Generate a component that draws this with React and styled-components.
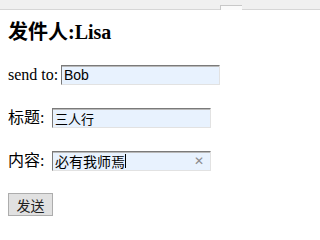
import React from 'react'
import styled, { createGlobalStyle } from 'styled-components'

const GlobalStyle = createGlobalStyle`
    body {
        margin: 0;
        background: #fff;
        font-family: "Liberation Serif", "Noto Sans CJK SC", serif;
        color: #000;
    }
`
const TopBar = styled.div`
    height: 10px;
    padding-top: 5px;
    padding-left: 220px;
    box-sizing: border-box;
    background: #f0f0f0;
    border-bottom: 1px solid #d6d6d6;
    display: flex;
`
const Tab = styled.div`
    width: 22px;
    height: 5px;
    background: #fafafa;
    border-top: 1px solid #c8c8c8;
    border-left: 1px solid #c8c8c8;
    box-sizing: border-box;
`
const Main = styled.div`
    padding: 11px 8px 0;
`
const Sender = styled.h3`
    margin: 0;
    font-size: 20px;
    line-height: 22px;
    font-weight: 700;
`
const Form = styled.div`
    margin-top: 22px;
    display: flex;
    flex-direction: column;
    gap: 23px;
`
const Row = styled.div`
    display: flex;
    align-items: center;
    height: 20px;
`
const Label = styled.span`
    width: ${props => props.w}px;
    font-size: 16px;
    line-height: 20px;
    white-space: nowrap;
`
const Field = styled.div`
    width: 159px;
    height: 20px;
    box-sizing: border-box;
    border: 1px solid;
    border-color: #7a7a7a #e2e2e2 #e2e2e2 #7a7a7a;
    box-shadow: inset 0 1px 0 #b9b9b9;
    background: #e8f2fe;
    padding: 0 2px;
    display: flex;
    align-items: center;
    font-family: "Liberation Sans", "Noto Sans CJK SC", sans-serif;
    font-size: ${props => props.size || 13}px;
    color: #000;
`
const Caret = styled.span`
    width: 1px;
    height: 14px;
    background: #000;
`
const Clear = styled.span`
    margin-left: auto;
    margin-right: 4px;
    font-size: 12px;
    color: #8c8c8c;
    font-family: "Liberation Sans", sans-serif;
`
const Button = styled.button`
    margin-top: -1px;
    align-self: flex-start;
    width: 45px;
    height: 23px;
    padding: 0;
    background: #e1e1e1;
    border: 1px solid #adadad;
    font-family: "Noto Sans CJK SC", sans-serif;
    font-size: 14px;
    color: #222;
`

const App = () => {
  return (
    <>
        <GlobalStyle/>
        <TopBar>
            <Tab/>
        </TopBar>
        <Main>
            <Sender>发件人:Lisa</Sender>
            <Form>
                <Row>
                    <Label w={53}>send to:</Label>
                    <Field size={14}>Bob</Field>
                </Row>
                <Row>
                    <Label w={44}>标题:</Label>
                    <Field>三人行</Field>
                </Row>
                <Row>
                    <Label w={44}>内容:</Label>
                    <Field size={14}>
                        必有我师焉<Caret/>
                        <Clear>✕</Clear>
                    </Field>
                </Row>
                <Button>发送</Button>
            </Form>
        </Main>
    </>
  )
}

export default App
